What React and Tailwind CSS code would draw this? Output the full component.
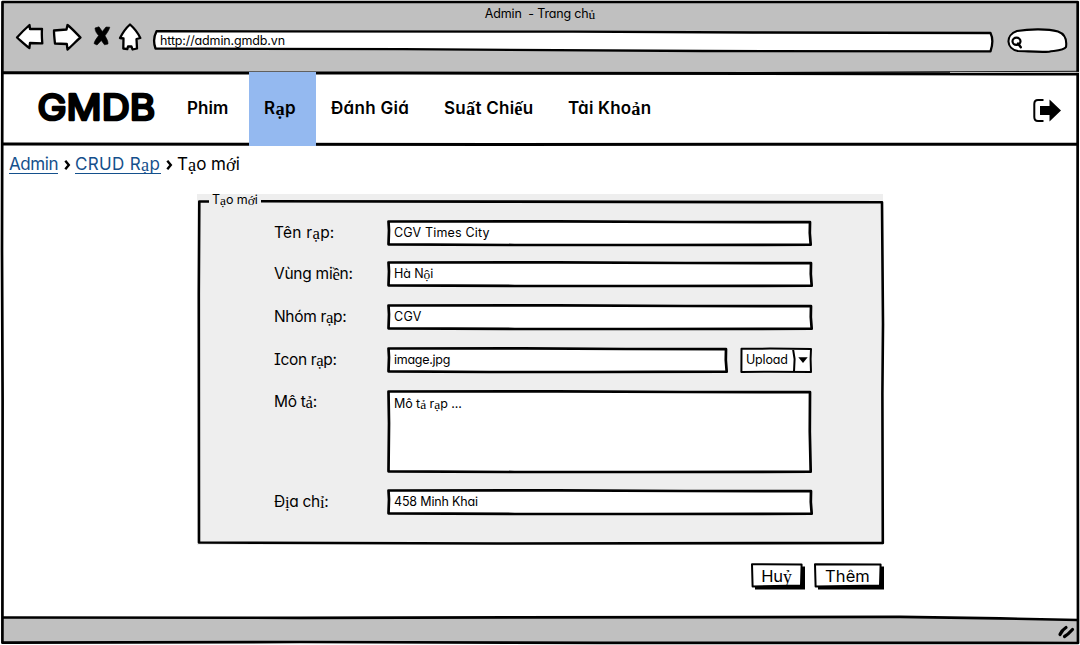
const SERIF = /([ạấếềảủộớỷịỉ])/;

function T({ s, className = "" }) {
  return (
    <span className={"whitespace-pre [font-feature-settings:'cv11','cv08'] " + className}>
      {s.split(SERIF).map((p, i) =>
        SERIF.test(p) ? (
          <span key={i} className="relative top-[0.5px] font-['Liberation_Serif',serif] leading-[0] text-[1.08em]">
            {p}
          </span>
        ) : (
          p
        )
      )}
    </span>
  );
}

/* Hand-drawn rectangle outline lying behind its content */
function Sketch({ w, h, d, sw = 2.7, fill = "#fff" }) {
  return (
    <svg className="absolute inset-0 -z-10 overflow-visible" width={w} height={h} viewBox={`0 0 ${w} ${h}`} aria-hidden="true">
      <path d={d} fill={fill} stroke="#000" strokeWidth={sw} strokeLinejoin="round" />
    </svg>
  );
}

function Field({ w, h = 26, text, tracking, className = "pt-[3px]" }) {
  const d = `M1.5 1.5 L${w * 0.4} 1.4 L${w * 0.7} 2 L${w - 2} 2.2 L${w - 2.2} ${h * 0.5} L${w - 1.3} ${h - 1.3} L${w * 0.6} ${h - 1} L${w * 0.3} ${h - 1} L1.5 ${h - 1.7} L2 ${h * 0.4} Z`;
  return (
    <div className={"relative isolate flex shrink-0 items-start pl-[7px] text-[12.5px] leading-[19px] " + className} style={{ width: w, height: h }}>
      <Sketch w={w} h={h} d={d} />
      <T s={text} className={tracking} />
    </div>
  );
}

function Row({ label, tracking, className = "", children }) {
  return (
    <div className={"flex items-start " + className}>
      <div className="w-[113px] shrink-0 text-[15.5px] leading-[26px]">
        <T s={label} className={tracking} />
      </div>
      {children}
    </div>
  );
}

function Button({ w, text, tracking }) {
  return (
    <button className="relative isolate flex h-[27px] justify-center pr-[3px] pt-[2px] text-[16.5px] leading-[23px]" style={{ width: w }}>
      <svg className="absolute inset-0 -z-10 overflow-visible" width={w} height="27" aria-hidden="true">
        <path d={`M4 4 L${w} 3.5 L${w} 26.5 L4 26.5 Z`} fill="#000" />
        <path d={`M1 1.2 L${w - 3.4} 1.6 L${w - 4} 22.6 L1.6 23.4 Z`} fill="#fff" stroke="#000" strokeWidth="2" strokeLinejoin="round" />
      </svg>
      <T s={text} className={tracking} />
    </button>
  );
}

function Chevron() {
  return (
    <svg width="7" height="10" viewBox="0 0 7 10" className="mt-[2px]" aria-hidden="true">
      <path d="M1.3 0.8 L4.8 5 L1.3 9.2" fill="none" stroke="#000" strokeWidth="2.4" />
    </svg>
  );
}

export default function App() {
  return (
    <div className="relative isolate flex h-[645px] w-[1080px] flex-col overflow-hidden bg-white font-['Inter','Liberation_Sans',sans-serif] text-black">
      <svg className="absolute inset-0 -z-10" width="1080" height="645" aria-hidden="true">
        <path d="M2 2 H1078 V73 H2 Z" fill="#c0c0c0" />
        <path d="M2 617 L900 617.3 L1078 620 V643 H2 Z" fill="#c0c0c0" />
        <g fill="none" stroke="#000" strokeWidth="2.7" strokeLinejoin="round">
          <path d="M2.5 2 L1077.7 2 L1077.6 250 L1078 643 L600 642.8 L300 642 L2.4 642.7 L2.6 400 L2 250 L2.2 140 Z" />
          <path d="M2 617.5 L300 617.8 L900 616.8 L1000 618.4 L1078 620" />
          <path d="M2 72.8 L400 73.1 L1078 74" strokeWidth="3" />
          <path d="M1 144 L500 144.4 L1078 144.2" strokeWidth="3" />
        </g>
        <path d="M700 72.7 L1078 71.3" stroke="#000" strokeWidth="1" />
        <path d="M950 72.4 H1080" stroke="#eee" strokeWidth="0.8" />
      </svg>

      <header className="flex h-[72px] flex-col">
        <div className="flex h-[28px] justify-center pt-[4px] text-[12.5px] leading-[19px]">
          <T s="Admin  - Trang chủ" className="tracking-[-0.17px]" />
        </div>
        <div className="flex h-[36px] items-start pl-[14px]">
          <svg width="130" height="30" viewBox="14 22 130 30" className="-mt-[6px]" aria-label="Navigation">
            <g fill="#fff" stroke="#000" strokeWidth="2.3" strokeLinejoin="round">
              <path d="M17 37.5 C21 33 25 29 29.5 25 L30 29 L42 28.8 C41.5 34 42 39 42.3 43.3 L30 43 L29.4 48 C25 45 21 41 17 37.5 Z" />
              <path d="M54 30.5 L66.5 29.5 L67.5 25 C72 28.5 76 33 80.5 37.5 C76 41 72 46 67.5 49.5 L66.8 44 L55 43.5 C54.5 39 54 35 54 30.5 Z" />
              <path d="M130 24.5 C126 28 122.5 33 120 38 L123.5 38.5 L123.3 48.5 L127.3 49.2 L128 46.5 L131.5 46.5 L132.5 49.5 L137 48.5 L136.5 39 L140.3 38 C138 33 134 28 130 24.5 Z" />
            </g>
            <path d="M95 28 L99 26.8 L102.3 31.5 L106 27 L109.8 27.2 C108.8 31 106.5 33.5 105 35.8 C106.5 38.5 108.3 41 108 44 L104.5 44.8 L101.3 40.5 L97 45 L94 43.5 C95 40 97 38 98.6 35.6 C97 33.5 95 31.5 95 28 Z" fill="#000" stroke="#000" strokeWidth="0.6" strokeLinejoin="round" />
          </svg>
          <div className="relative isolate ml-[9px] h-[23px] w-[840px] pl-[7px] pt-[3px] text-[12.5px] leading-[19px]">
            <Sketch w={840} h={23} sw={2.3} d="M3.5 3.2 C0.5 9 0.5 15 2.5 20.5 L250 21.2 L550 23 L837.5 23.4 C840 16 840 10 837.5 5 L600 4.5 L420 3.6 Z" />
            <T s="http://admin.gmdb.vn" className="tracking-[-0.14px]" />
          </div>
          <svg width="62" height="28" viewBox="1006 27 62 28" className="ml-[13px] -mt-[1px]" aria-label="Search">
            <path d="M1017 31 C1030 28.8 1048 28.8 1058 31.5 C1065 34 1067 40 1066 47 C1064 50.5 1057 50.5 1049 51.7 C1038 52.5 1026 51 1018 51 C1006 49 1005 35 1017 31 Z" fill="#fff" stroke="#000" strokeWidth="2.1" />
            <ellipse cx="1016.5" cy="41.3" rx="4" ry="3.6" fill="none" stroke="#000" strokeWidth="2.2" />
            <path d="M1018 43.5 L1020.8 47.3" stroke="#000" strokeWidth="2.4" strokeLinecap="round" />
          </svg>
        </div>
      </header>

      <nav className="flex h-[74px] items-stretch text-[17px] font-semibold leading-[72px]">
        <svg width="120" height="72" viewBox="36 72 120 72" className="ml-[36px] shrink-0" aria-label="GMDB">
          <text x="37.6" y="120.4" textLength="117.5" lengthAdjust="spacingAndGlyphs" fontFamily="Inter" fontWeight="400" fontSize="36" fill="#000" stroke="#000" strokeWidth="2.7" strokeLinejoin="round" strokeLinecap="round">GMDB</text>
        </svg>
        <div className="ml-[31px] w-[62px] shrink-0"><T s="Phim" className="tracking-[0.1px]" /></div>
        <div className="w-[67px] shrink-0 bg-[#94b9f0] pl-[15px]"><T s="Rạp" className="tracking-[0.3px]" /></div>
        <div className="ml-[15px] w-[113px] shrink-0"><T s="Đánh Giá" className="tracking-[0.3px]" /></div>
        <div className="w-[124px] shrink-0"><T s="Suất Chiếu" className="tracking-[0.25px]" /></div>
        <div className="grow"><T s="Tài Khoản" className="tracking-[0.2px]" /></div>
        <svg width="30" height="26" viewBox="1032 98 30 26" className="mr-[18px] mt-[26px] shrink-0" aria-label="Log out">
          <path d="M1043.5 100 H1038 Q1034.3 100 1034.3 104 V117 Q1034.3 121 1038 121 H1043.5" fill="none" stroke="#000" strokeWidth="2" />
          <path d="M1040 106 H1049.5 V99.5 L1061 110.5 L1049.5 121.5 V115 H1040 Z" fill="#000" />
        </svg>
      </nav>

      <div className="flex h-[48px] items-start pl-[9px] pt-[6px] text-[17px] leading-[24px]">
        <a className="h-[28px] w-[49px] text-[#14508c]"><span className="block h-[22px] border-b border-[#14508c]"><T s="Admin" className="tracking-[-0.44px]" /></span></a>
        <span className="ml-[6px] mr-[4px] flex h-[24px] items-center"><Chevron /></span>
        <a className="h-[28px] w-[86px] text-[#14508c]"><span className="block h-[22px] border-b border-[#14508c]"><T s="CRUD Rạp" className="tracking-[0.34px]" /></span></a>
        <span className="ml-[5px] mr-[4px] flex h-[24px] items-center"><Chevron /></span>
        <T s="Tạo mới" className="tracking-[0px]" />
      </div>

      <section className="relative isolate ml-[197px] h-[351px] w-[687px] shrink-0">
        <div className="absolute inset-y-0 left-0 -z-20 w-[686px] bg-[#eeeeee]" />
        <svg className="absolute inset-0 -z-10 overflow-visible" width="687" height="351" aria-hidden="true">
          <path d="M12 7.5 H2.3 L1.8 100 L2 348.5 L300 349.5 L685.8 349 L685.4 200 L686 130 L685 8.3 L300 7.6 L64 7.3" fill="none" stroke="#000" strokeWidth="2.6" strokeLinejoin="round" />
        </svg>
        <div className="h-[26px] pl-[15px] text-[12.5px] leading-[12px]"><T s="Tạo mới" className="tracking-[-0.08px]" /></div>
        <div className="flex flex-col pl-[77px]">
          <Row label="Tên rạp:" tracking="tracking-[0.25px]" className="h-[41px]">
            <Field w={425} text="CGV Times City" tracking="tracking-[0.18px]" />
          </Row>
          <Row label="Vùng miền:" tracking="tracking-[-0.26px]" className="h-[43px]">
            <Field w={426} text="Hà Nội" tracking="tracking-[-0.08px]" />
          </Row>
          <Row label="Nhóm rạp:" tracking="tracking-[-0.33px]" className="h-[43px]">
            <Field w={426} text="CGV" tracking="tracking-[0.3px]" />
          </Row>
          <Row label="Icon rạp:" tracking="tracking-[-0.36px]" className="h-[42px]">
            <Field w={341} text="image.jpg" tracking="tracking-[-0.28px]" />
            <div className="relative isolate ml-[12px] flex h-[26px] w-[72px] items-start pl-[6px] pt-[3px] text-[12.5px] leading-[19px]">
              <Sketch w={72} h={26} sw={2} d="M1.5 1.8 L30 1.6 L71 2 L70.6 12 L71 25 L30 24.8 L1.4 25 Z M53 1.8 L54.6 12 L54 25" />
              <T s="Upload" className="tracking-[-0.2px]" />
              <svg width="10" height="6" viewBox="0 0 10 6" className="ml-[10px] mt-[7px] shrink-0" aria-hidden="true"><path d="M0.3 0.3 H9.7 L5 6 Z" /></svg>
            </div>
          </Row>
          <Row label="Mô tả:" tracking="tracking-[-0.3px]" className="h-[100px]">
            <Field w={425} h={83} text="Mô tả rạp ..." tracking="tracking-[-0.06px]" className="mt-[1px] pt-[4px]" />
          </Row>
          <Row label="Địa chỉ:" tracking="tracking-[-0.3px]" className="h-[42px]">
            <Field w={426} text="458 Minh Khai" tracking="tracking-[-0.16px]" />
          </Row>
        </div>
      </section>

      <div className="ml-[751px] mt-[18px] flex gap-[9px]">
        <Button w={54} text="Huỷ" tracking="tracking-[-0.1px]" />
        <Button w={70} text="Thêm" tracking="tracking-[0.1px]" />
      </div>

      <footer className="mt-auto flex h-[27px] justify-end pr-[5px]">
        <svg width="18" height="14" viewBox="0 0 18 14" className="mt-[7px]" aria-hidden="true">
          <path d="M3 9.5 Q5 5 9 2.5 M7.5 11.5 Q11 9.5 15.5 4.5" fill="none" stroke="#000" strokeWidth="3.2" strokeLinecap="round" />
        </svg>
      </footer>
    </div>
  );
}
